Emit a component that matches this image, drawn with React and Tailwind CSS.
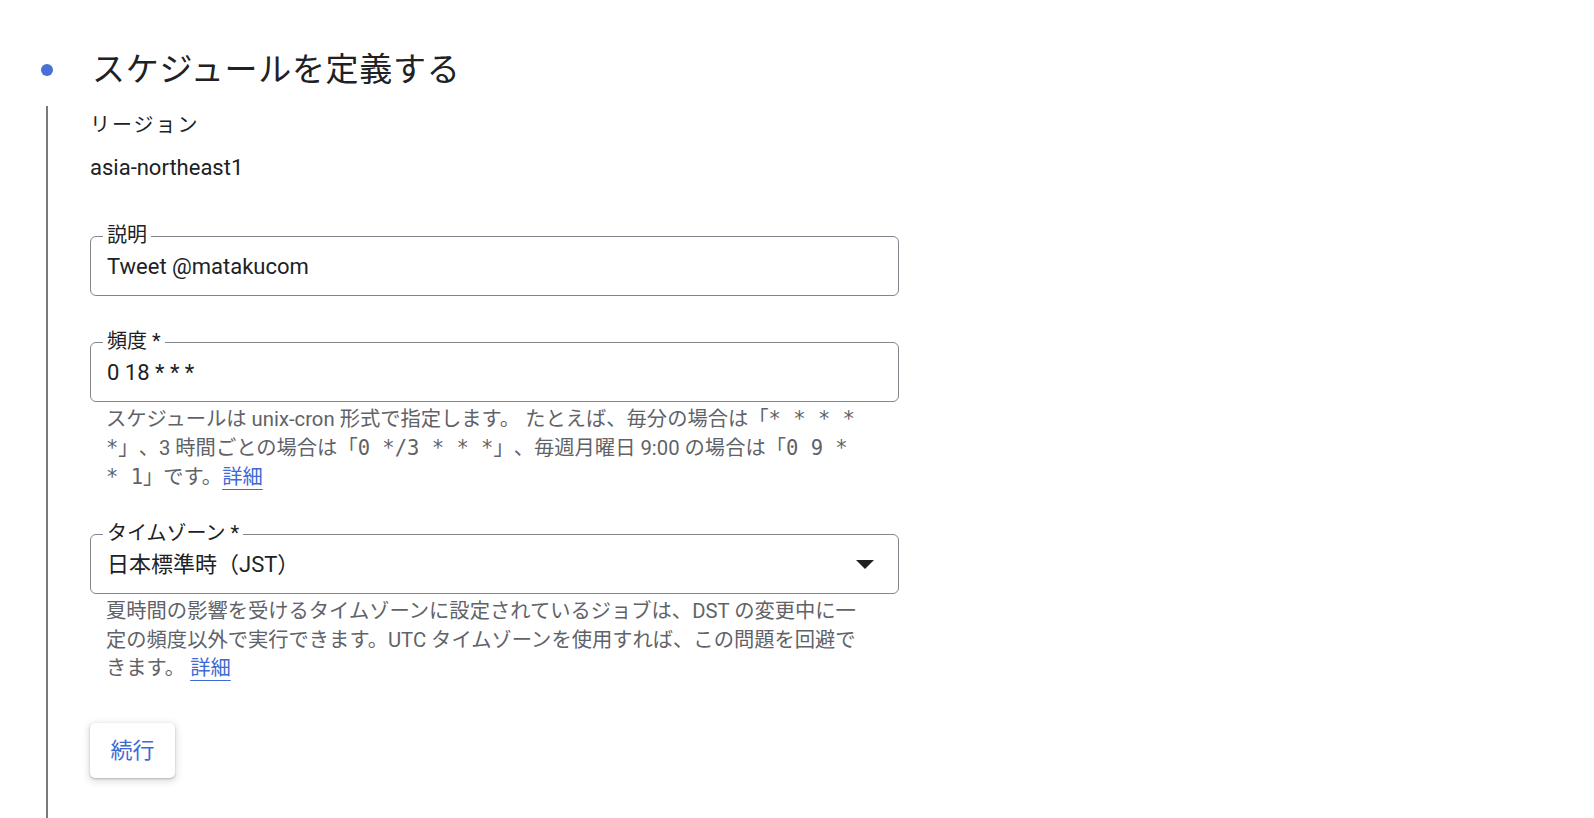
import React from "react";

const FONT = { fontFamily: 'Roboto, "Noto Sans CJK JP", sans-serif' };
const MONO = "font-['DejaVu_Sans_Mono',monospace] text-[20.5px]";

function Field({ label, children, right }) {
  return (
    <div className="relative w-[809px] h-[60px] rounded-[6px] border border-[#80868b] flex items-center pl-[16px] pr-[24px]">
      <span className="absolute left-[12px] top-[-15px] bg-white px-[4px] text-[20px] leading-[26px] text-[#202124]">
        {label}
      </span>
      <span className="flex-1 text-[22px] text-[#202124] whitespace-nowrap">{children}</span>
      {right}
    </div>
  );
}

function Link({ children }) {
  return (
    <span className="text-[#3d6ad6] underline underline-offset-[5px] decoration-[1px]">{children}</span>
  );
}

export default function App() {
  return (
    <div style={FONT} className="bg-white w-full min-h-[818px] h-[818px] overflow-hidden [text-spacing-trim:space-all]">
      <div className="flex items-center h-[44px] mt-[48px]">
        <div className="ml-[41px] w-[12px] h-[12px] rounded-full bg-[#4a6fd6]" />
        <h1 className="ml-[39px] text-[33px] leading-[44px] tracking-[0.7px] text-[#202124] whitespace-nowrap">
          スケジュールを定義する
        </h1>
      </div>
      <div className="flex mt-[14px] h-[712px]">
        <div className="ml-[46px] w-[2px] bg-[#7a7a7a]" />
        <div className="ml-[42px] flex flex-col pt-[5px]">
          <div className="text-[20px] leading-[28px] tracking-[2px] text-[#202124]">リージョン</div>
          <div className="mt-[15px] text-[22px] leading-[28px] text-[#202124]">asia-northeast1</div>

          <div className="mt-[54px]">
            <Field label="説明">Tweet @matakucom</Field>
          </div>

          <div className="mt-[46px]">
            <Field label="頻度 *">0 18 * * *</Field>
          </div>
          <div className="mt-[3px] pl-[16px] text-[20.3px] leading-[29px] text-[#5f6368] whitespace-nowrap">
            <div>
              スケジュールは unix-cron 形式で指定します。 たとえば、毎分の場合は「<span className={MONO}>* * * *</span>
            </div>
            <div>
              <span className={MONO}>*</span>」、3 時間ごとの場合は「<span className={MONO}>0 */3 * * *</span>」、毎週月曜日 9:00 の場合は「<span className={MONO}>0 9 *</span>
            </div>
            <div>
              <span className={MONO}>* 1</span>」です。<Link>詳細</Link>
            </div>
          </div>

          <div className="mt-[42px]">
            <Field
              label="タイムゾーン *"
              right={
                <svg width="18" height="9" viewBox="0 0 18 9">
                  <polygon points="0,0 18,0 9,9" fill="#202124" />
                </svg>
              }
            >
              日本標準時（JST）
            </Field>
          </div>
          <div className="mt-[3px] pl-[16px] text-[20.3px] leading-[29px] text-[#5f6368] whitespace-nowrap">
            <div>夏時間の影響を受けるタイムゾーンに設定されているジョブは、DST の変更中に一</div>
            <div>定の頻度以外で実行できます。UTC タイムゾーンを使用すれば、この問題を回避で</div>
            <div className="leading-[26px]">
              きます。 <Link>詳細</Link>
            </div>
          </div>

          <div className="mt-[42px]">
            <button className="w-[85px] h-[55px] rounded-[5px] bg-white text-[22px] text-[#3d6ad6] shadow-[0_1px_2px_rgba(60,64,67,0.3),0_2px_6px_2px_rgba(60,64,67,0.15)]">
              続行
            </button>
          </div>
        </div>
      </div>
    </div>
  );
}
